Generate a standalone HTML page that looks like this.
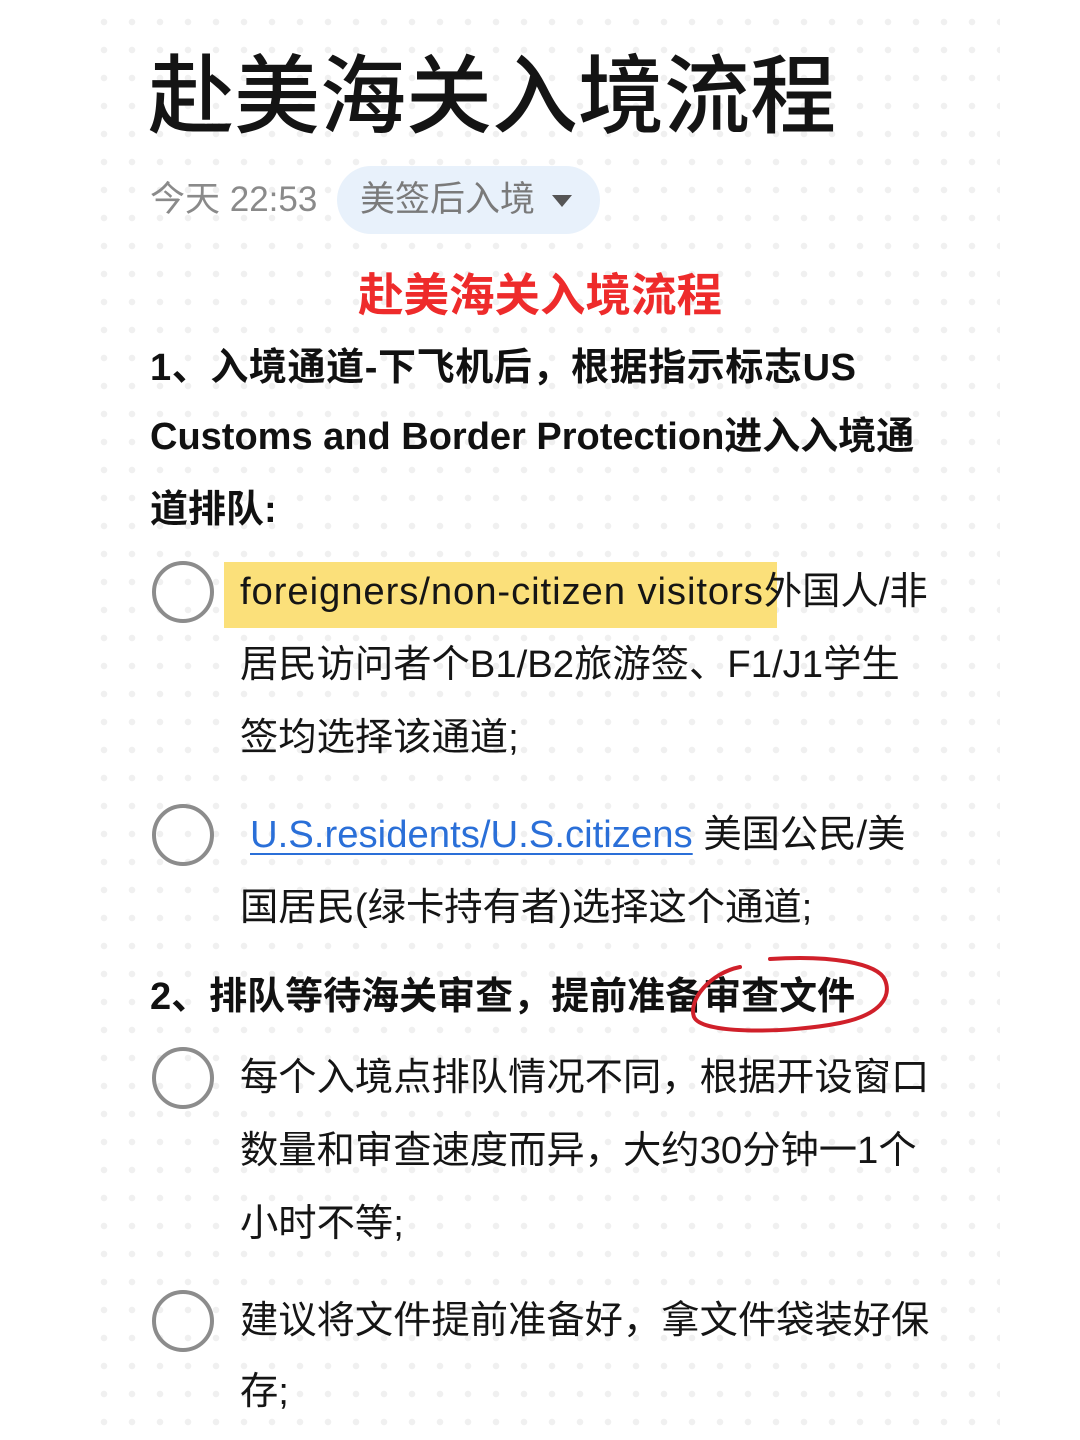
<!DOCTYPE html>
<html><head><meta charset="utf-8">
<style>
html,body{margin:0;padding:0;}
body{width:1080px;height:1440px;position:relative;overflow:hidden;background:#fff;
font-family:"Liberation Sans","Noto Sans CJK SC",sans-serif;color:#111;}
.grid{position:absolute;left:80px;top:0;width:920px;height:1440px;
background-image:radial-gradient(circle,#f0f0f0 3px,transparent 3.5px);
background-size:28px 28px;background-position:10px 8px;}
.t{position:absolute;white-space:nowrap;}
.title{left:148px;top:45px;font-size:86px;line-height:104px;font-weight:500;color:#141414;}
.meta{left:150px;top:180px;font-size:35px;line-height:40px;color:#8a8a8a;}
.pill{position:absolute;left:337px;top:166px;width:263px;height:68px;border-radius:34px;background:#e8f1fb;}
.pilltxt{left:360px;top:180px;font-size:35px;line-height:40px;color:#7a7a7a;}
.red{left:0;width:1080px;text-align:center;top:270px;font-size:45.5px;line-height:52px;font-weight:bold;color:#ee2b2b;}
.b{font-size:38px;line-height:46px;font-weight:bold;left:150px;}
.n{font-size:38.3px;line-height:46px;left:240px;color:#151515;}
.c{position:absolute;left:152px;width:54px;height:54px;border:4px solid #8c8c8c;border-radius:50%;}
.hl{position:absolute;left:224px;top:562px;width:553px;height:66px;background:#fbe07a;}
.link{color:#2a6fd8;text-decoration:underline;text-decoration-thickness:2px;text-underline-offset:6px;}
</style></head><body>
<div class="grid"></div>
<div class="t title">赴美海关入境流程</div>
<div class="t meta">今天 22:53</div>
<div class="pill"></div>
<div class="t pilltxt">美签后入境</div>
<svg style="position:absolute;left:551px;top:193px" width="22" height="16"><path d="M1 2 L21 2 L11 14 Z" fill="#555"/></svg>
<div class="t red">赴美海关入境流程</div>
<div class="t b" style="top:345px;letter-spacing:0.6px">1、入境通道-下飞机后，根据指示标志US</div>
<div class="t b" style="top:414px">Customs and Border Protection进入入境通</div>
<div class="t b" style="top:487px">道排队:</div>

<div class="c" style="top:561px"></div>
<div class="hl"></div>
<div class="t n" style="top:569px"><span style="letter-spacing:0.9px">foreigners/non-citizen visitors</span>外国人/非</div>
<div class="t n" style="top:642px">居民访问者个B1/B2旅游签、F1/J1学生</div>
<div class="t n" style="top:715px">签均选择该通道;</div>

<div class="c" style="top:804px"></div>
<div class="t n" style="top:812px;left:250px"><span class="link">U.S.residents/U.S.citizens</span> 美国公民/美</div>
<div class="t n" style="top:885px">国居民(绿卡持有者)选择这个通道;</div>

<div class="t b" style="top:974px">2、排队等待海关审查，提前准备审查文件</div>
<svg style="position:absolute;left:680px;top:945px" width="220" height="100"><path d="M60 22 C30 28 8 55 14 72 C22 90 110 88 160 78 C200 70 212 52 205 35 C198 18 150 10 90 14" fill="none" stroke="#d0202a" stroke-width="4" stroke-linecap="round"/></svg>

<div class="c" style="top:1047px"></div>
<div class="t n" style="top:1055px">每个入境点排队情况不同，根据开设窗口</div>
<div class="t n" style="top:1128px">数量和审查速度而异，大约30分钟一1个</div>
<div class="t n" style="top:1201px">小时不等;</div>

<div class="c" style="top:1290px"></div>
<div class="t n" style="top:1298px">建议将文件提前准备好，拿文件袋装好保</div>
<div class="t n" style="top:1369px">存;</div>
</body></html>
